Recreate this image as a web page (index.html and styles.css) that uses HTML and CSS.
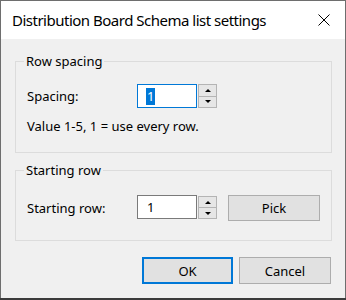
FILE: index.html
```html
<!DOCTYPE html>
<html>
<head>
<meta charset="utf-8">
<link rel="stylesheet" href="styles.css">
</head>
<body>
<div class="dialog">
  <div class="titlebar">
    <span class="title">Distribution Board Schema list settings</span>
    <span class="close"><svg width="12" height="12" viewBox="0 0 12 12"><path d="M0.5 0.5 L11.5 11.5 M11.5 0.5 L0.5 11.5" stroke="#000" stroke-width="1" fill="none"/></svg></span>
  </div>
  <div class="content">
    <fieldset class="group group-spacing">
      <legend>Row spacing</legend>
      <div class="row">
        <span class="label">Spacing:</span>
        <div class="input focus"><span class="sel">1</span></div>
        <div class="spinner"><span class="sbtn"><i class="up"></i></span><span class="sbtn"><i class="down"></i></span></div>
      </div>
      <p class="hint">Value 1-5, 1 = use every row.</p>
    </fieldset>
    <fieldset class="group group-start">
      <legend>Starting row</legend>
      <div class="row row-pick">
        <span class="label">Starting row:</span>
        <div class="input"><span>1</span></div>
        <div class="spinner"><span class="sbtn"><i class="up"></i></span><span class="sbtn"><i class="down"></i></span></div>
        <button class="btn pick">Pick</button>
      </div>
    </fieldset>
  </div>
  <div class="footer">
    <button class="btn default">OK</button>
    <button class="btn">Cancel</button>
  </div>
</div>
</body>
</html>
```

FILE: styles.css
```css
html, body {
  margin: 0;
  padding: 0;
  background: #3b3b3b;
}
.dialog {
  width: 344px;
  height: 297px;
  border: 1px solid #6e6e6e;
  border-bottom: none;
  background: #f0f0f0;
  font-family: "Noto Sans", "Open Sans", sans-serif;
  font-size: 13px;
  color: #000;
  display: flex;
  flex-direction: column;
}
.titlebar {
  height: 38px;
  background: #fff;
  display: flex;
  align-items: center;
  justify-content: space-between;
  padding: 0 15px 0 11px;
}
.title {
  font-size: 15px;
  letter-spacing: -0.5px;
  line-height: 20px;
}
.close {
  display: flex;
  width: 12px;
  height: 12px;
}
.content {
  padding: 14px 13px 0 14px;
  display: flex;
  flex-direction: column;
}
.group {
  margin: 0;
  padding: 0 11px 0 11px;
  border: 1px solid #dcdcdc;
  min-width: 0;
}
.group legend {
  padding: 0 2px;
  margin-left: -3px;
  line-height: 16px;
  font-size: 13px;
}
.group-spacing { padding-bottom: 18px; }
.group-start { margin-top: 9px; padding-bottom: 19px; }
.row {
  display: flex;
  align-items: center;
  margin-top: 15px;
  height: 24px;
}
.row-pick {
  margin-top: 17px;
  height: 26px;
  align-items: flex-start;
}
.row-pick .label { line-height: 26px; }
.label {
  width: 110px;
  line-height: 24px;
}
.input {
  box-sizing: border-box;
  width: 60px;
  height: 24px;
  border: 1px solid #7a7a7a;
  background: #fff;
  display: flex;
  align-items: center;
  padding-left: 9px;
  line-height: 16px;
}
.input.focus {
  border-color: #0078d7;
  padding-left: 8px;
}
.sel {
  background: #0078d7;
  color: #fff;
  padding: 0 1px;
  line-height: 17px;
}
.spinner {
  box-sizing: border-box;
  width: 19px;
  height: 24px;
  margin-left: 1px;
  display: flex;
  flex-direction: column;
}
.row-pick .spinner { height: 23px; margin-top: 1px; }
.sbtn {
  flex: 1;
  box-sizing: border-box;
  border: 1px solid #b4b4b4;
  background: #e6e6e6;
  display: flex;
  align-items: center;
  justify-content: center;
}
.sbtn + .sbtn { border-top: none; }
.up {
  width: 0; height: 0;
  border-left: 3px solid transparent;
  border-right: 3px solid transparent;
  border-bottom: 3px solid #000;
}
.down {
  width: 0; height: 0;
  border-left: 3px solid transparent;
  border-right: 3px solid transparent;
  border-top: 3px solid #000;
}
.hint {
  margin: 10px 0 0 0;
  line-height: 16px;
}
.btn {
  box-sizing: border-box;
  font-family: "Noto Sans", "Open Sans", sans-serif;
  font-size: 13px;
  color: #000;
  background: #e1e1e1;
  border: 1px solid #adadad;
  padding: 0;
  margin: 0;
}
.pick {
  width: 92px;
  height: 26px;
  margin-left: 11px;
}
.footer {
  display: flex;
  justify-content: flex-end;
  gap: 6px;
  padding: 16px 14px 0 0;
}
.footer .btn {
  width: 92px;
  height: 27px;
}
.footer .default {
  width: 91px;
  border: 2px solid #0078d7;
}
```
